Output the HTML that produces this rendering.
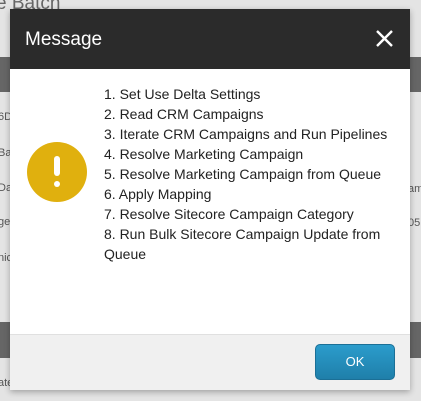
<!DOCTYPE html>
<html><head><style>
*{margin:0;padding:0;box-sizing:border-box}
body{width:421px;height:401px;overflow:hidden;background:#e4e4e4;font-family:"Liberation Sans",Arial,sans-serif;position:relative}
.bg{position:absolute;color:#555;font-size:11px}
.band{position:absolute;left:0;width:421px;background:#666}
.dlg{position:absolute;left:10px;top:9px;width:400px;height:381px;background:#fff;box-shadow:0 2px 6px rgba(0,0,0,.3)}
.hd{height:60px;background:#2b2b2b;color:#fff;font-size:19px;padding:20px 0 0 15px;position:relative}
.x{position:absolute;right:16px;top:20px}
.ic{position:absolute;left:17px;top:133px;width:60px;height:60px;border-radius:50%;background:#e0b00e}
.ic i{position:absolute;left:27px;top:14px;width:6px;height:20px;background:#fff;border-radius:3px}
.ic b{position:absolute;left:27px;top:39px;width:6px;height:6px;background:#fff;border-radius:50%}
.txt{position:absolute;left:94px;top:75px;width:296px;font-size:14px;line-height:20px;color:#222}
.ft{position:absolute;left:0;top:325px;width:400px;height:56px;background:#f0f0f0;border-top:1px solid #e0e0e0}
.ok{position:absolute;left:305px;top:9px;width:80px;height:36px;border-radius:5px;background:linear-gradient(#2b9ccc,#1f7faa);border:1px solid #1b6f96;color:#fff;font-size:13px;text-align:center;line-height:34px}
</style></head><body>
<div class="bg" style="left:-4px;top:-7px;font-size:19px;color:#666">e Batch</div>
<div class="band" style="top:57px;height:35px"></div>
<div class="band" style="top:322px;height:36px"></div>
<div class="bg" style="left:-2px;top:111px">6D</div>
<div class="bg" style="left:-2px;top:147px">Ba</div>
<div class="bg" style="left:-2px;top:182px">Da</div>
<div class="bg" style="left:-2px;top:216px">ge</div>
<div class="bg" style="left:-2px;top:252px">nic</div>
<div class="bg" style="left:-2px;top:377px">ate</div>
<div class="bg" style="left:408px;top:183px">am</div>
<div class="bg" style="left:408px;top:217px">05</div>
<div class="dlg">
<div class="hd">Message<svg class="x" width="19" height="19" viewBox="0 0 19 19"><path d="M2 2L17 17M17 2L2 17" stroke="#fff" stroke-width="2.4"/></svg></div>
<div class="ic"><i></i><b></b></div>
<div class="txt">1. Set Use Delta Settings<br>2. Read CRM Campaigns<br>3. Iterate CRM Campaigns and Run Pipelines<br>4. Resolve Marketing Campaign<br>5. Resolve Marketing Campaign from Queue<br>6. Apply Mapping<br>7. Resolve Sitecore Campaign Category<br>8. Run Bulk Sitecore Campaign Update from Queue</div>
<div class="ft"><div class="ok">OK</div></div>
</div>
</body></html>
